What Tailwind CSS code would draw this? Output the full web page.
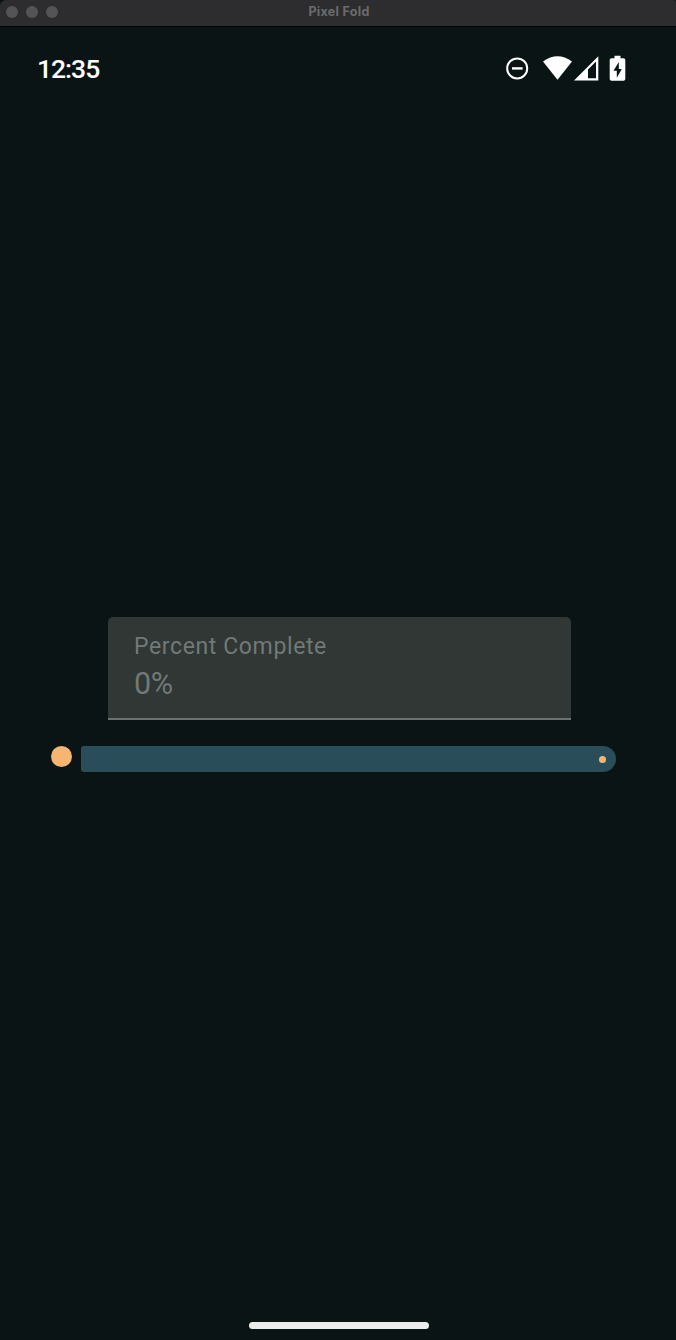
<!DOCTYPE html>
<html lang="en">
<head>
<meta charset="utf-8">
<title>Pixel Fold</title>
<script src="https://cdn.jsdelivr.net/npm/@tailwindcss/browser@4"></script>
</head>
<body class="bg-black">
<div class="flex h-[1340px] w-[676px] flex-col overflow-hidden bg-[#0b1414]">
  <header class="grid h-[27px] shrink-0 grid-cols-3 rounded-tl-[6px] rounded-tr-[3px] border-b border-black bg-[#2d2d2f] pb-[2px]">
    <div class="flex items-center gap-2 pl-[6px]">
      <span class="size-3 rounded-full bg-[#545456]"></span>
      <span class="size-3 rounded-full bg-[#545456]"></span>
      <span class="size-3 rounded-full bg-[#545456]"></span>
    </div>
    <h1 class="self-center pl-[2px] text-center font-[Inter] text-[12.5px] leading-4 font-bold tracking-[0.3px] text-[#6b6b6d]">Pixel Fold</h1>
  </header>
  <div class="flex h-[82px] shrink-0 items-center justify-between pr-[50px] pl-[37px]">
    <time class="pt-[2px] font-[Roboto] text-[26.5px] leading-8 font-medium tracking-[-1px] text-white">12:35</time>
    <svg class="h-[28px] w-[121px]" viewBox="505 54 121 28" fill="#fff">
      <circle cx="517.2" cy="68.4" r="10" fill="none" stroke="#fff" stroke-width="2"/>
      <path d="M512 67.2h10.6v2.4H512z"/>
      <path d="M543 61.5Q557.5 51 572 61.5L557.5 79.8Z"/>
      <path fill-rule="evenodd" d="M598.3 56.2V80.4H574ZM596 61.5L588 69.5V78.2H596Z"/>
      <path fill-rule="evenodd" d="M614.5 55.8h6v2.4h3q1.8 0 1.8 1.8v19q0 1.8-1.8 1.8h-12q-1.8 0-1.8-1.8V60q0-1.8 1.8-1.8h3ZM618.8 62l-5.3 8.7h3.3v7.1l5-8.9h-3Z"/>
    </svg>
  </div>
  <main class="flex grow flex-col pt-[508px]">
    <div class="ml-[108px] flex h-[103px] w-[463px] flex-col rounded-t-[5px] border-b-2 border-[#6b7270] bg-[#303735] pt-[16px] pl-[26px] font-[Roboto] text-[#727977]">
      <label class="text-[23px] leading-[28px] tracking-[0.62px]">Percent Complete</label>
      <span class="mt-[4px] text-[30.5px] leading-[37px] tracking-[-0.3px]">0%</span>
    </div>
    <div class="mt-[26px] flex gap-[10px] pl-[51px]">
      <span class="size-[21px] rounded-full bg-[#f6b571]"></span>
      <div class="-ml-[0.6px] flex h-[26.4px] w-[534.6px] items-center justify-end rounded-l-[3px] rounded-r-[13.5px] bg-[#294d59] pr-[10px]">
        <span class="size-[7px] rounded-full bg-[#f6b571]"></span>
      </div>
    </div>
  </main>
  <div class="mb-[11px] ml-[249px] h-[7px] w-[180px] shrink-0 rounded-full bg-[#ebeded]"></div>
</div>
</body>
</html>
